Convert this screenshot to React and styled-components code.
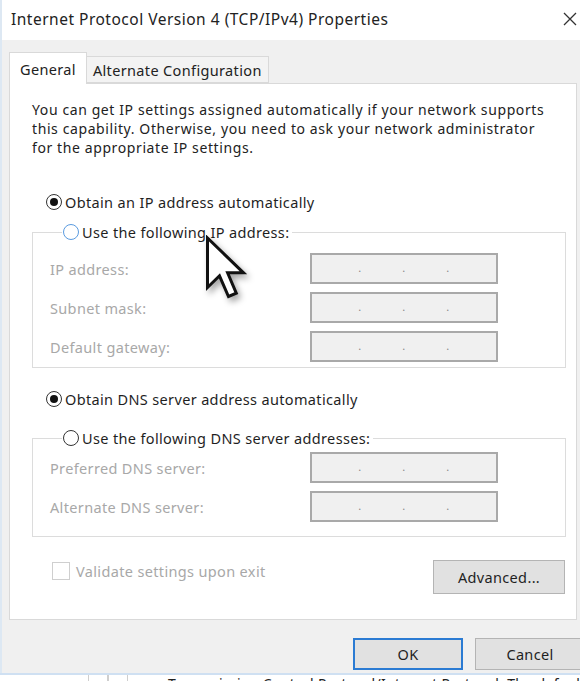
import React from 'react';
import styled, { createGlobalStyle } from 'styled-components';

const GlobalStyle = createGlobalStyle`
  html, body {
    margin: 0;
    padding: 0;
    background: #ffffff;
  }
  body {
    font-family: "Noto Sans", "Open Sans", sans-serif;
    color: #1a1a1a;
    letter-spacing: 0.35px;
  }
`;

const Window = styled.div`
  position: relative;
  width: 580px;
  height: 681px;
  overflow: hidden;
  display: flex;
  flex-direction: column;
  background: #ffffff;
`;

const TitleBar = styled.div`
  height: 40px;
  flex: none;
  display: flex;
  align-items: center;
  justify-content: space-between;
  padding: 0 0 2px 9px;
  box-sizing: border-box;
  font-size: 15.5px;
  letter-spacing: 0.5px;
  color: #222;
  background: #fff;
  border-left: 2px solid #dde8f3;
`;

const CloseIcon = styled.svg`
  width: 14px;
  height: 14px;
  margin-right: 3px;
`;

const Body = styled.div`
  flex: none;
  height: 633px;
  box-sizing: border-box;
  background: #f0f0f0;
  border-left: 2px solid #dde8f3;
  padding: 12px 3px 3px 7px;
  display: flex;
  flex-direction: column;
`;

const Tabs = styled.div`
  display: flex;
  align-items: flex-end;
  height: 31px;
  flex: none;
`;

const Tab = styled.div`
  box-sizing: border-box;
  height: ${p => (p.active ? '32px' : '27px')};
  padding: 0 ${p => (p.active ? '10px' : '6px')};
  display: flex;
  align-items: center;
  font-size: 14.5px;
  color: #222;
  background: ${p => (p.active ? '#ffffff' : '#f3f3f3')};
  border: 1px solid #d9d9d9;
  border-bottom: ${p => (p.active ? 'none' : '1px solid #d9d9d9')};
  margin-bottom: ${p => (p.active ? '-1px' : '0')};
  position: relative;
  z-index: ${p => (p.active ? 1 : 0)};
  border-left: ${p => (p.active ? '1px solid #d9d9d9' : 'none')};
`;

const Panel = styled.div`
  flex: none;
  height: 537px;
  box-sizing: border-box;
  background: #ffffff;
  border: 1px solid #d9d9d9;
  padding: 16px 10px 0 22px;
  display: flex;
  flex-direction: column;
  font-size: 14.5px;
`;

const Description = styled.p`
  margin: 0;
  font-size: 14px;
  letter-spacing: 0.6px;
  line-height: 19px;
  color: #222;
  white-space: nowrap;
`;

const RadioRow = styled.label`
  display: flex;
  align-items: center;
  height: 20px;
  margin: ${p => p.margin || '0'};
  color: #1f1f1f;
  gap: 3px;
  white-space: nowrap;
`;

const RadioDot = styled.span`
  width: 16px;
  height: 16px;
  box-sizing: border-box;
  border-radius: 50%;
  border: ${p => (p.hover ? '1.5px solid #5a9be0' : '1px solid #333')};
  background: #fff;
  display: flex;
  align-items: center;
  justify-content: center;
  flex: none;

  &::after {
    content: '';
    width: 8px;
    height: 8px;
    border-radius: 50%;
    background: #111;
    display: ${p => (p.checked ? 'block' : 'none')};
  }
`;

const Group = styled.fieldset`
  margin: ${p => p.top}px 0 0 0;
  padding: ${p => p.pad}px 67px ${p => p.bottom}px 17px;
  border: 1px solid #dcdcdc;
  min-width: 0;
  display: flex;
  flex-direction: column;
  gap: 8px;
`;

const Legend = styled.legend`
  margin-left: 12px;
  padding: 0 3px 0 1px;
`;

const FieldRow = styled.div`
  display: flex;
  align-items: center;
  justify-content: space-between;
  height: 31px;
`;

const FieldLabel = styled.span`
  color: #a8a8a8;
`;

const IpBox = styled.div`
  width: 188px;
  height: 31px;
  box-sizing: border-box;
  border: 2px solid #a9a9a9;
  background: #f0f0f0;
  display: flex;
  justify-content: space-around;
  align-items: flex-end;
  padding: 0 26px 9px 26px;
  font-size: 11px;
  line-height: 1;
  color: #888;
`;

const BottomRow = styled.div`
  display: flex;
  align-items: flex-start;
  justify-content: space-between;
  margin-top: 23px;
  padding-left: 20px;
  padding-right: 1px;
`;

const CheckLabel = styled.label`
  display: flex;
  align-items: center;
  gap: 6px;
  color: #a8a8a8;
  height: 19px;
  margin-top: 1px;
`;

const CheckBox = styled.span`
  width: 18px;
  height: 18px;
  box-sizing: border-box;
  border: 1px solid #cfcfcf;
  background: #fff;
`;

const Button = styled.button`
  font-family: inherit;
  font-size: 14.5px;
  letter-spacing: 0.35px;
  color: #1f1f1f;
  background: #e1e1e1;
  border: ${p => (p.primary ? '2px solid #2b7bd3' : '1px solid #b4b4b4')};
  width: ${p => p.width}px;
  height: ${p => p.height}px;
  padding: 0;
  flex: none;
`;

const Footer = styled.div`
  display: flex;
  gap: 12px;
  margin-top: 18px;
  padding-left: 344px;
`;

const Strip = styled.div`
  flex: 1;
  border-top: 2px solid #cfe0f2;
  background: #fff;
  display: flex;
  align-items: flex-start;
  overflow: hidden;
  font-size: 14px;
  color: #222;
  padding-left: 88px;
`;

const StripCell = styled.span`
  width: 18px;
  height: 8px;
  border: 1px solid #cfcfcf;
  border-top: none;
  flex: none;
`;

const StripText = styled.span`
  margin-left: 40px;
  line-height: 1;
  margin-top: 2px;
  white-space: nowrap;
`;

const Pointer = styled.svg`
  position: absolute;
  left: 204px;
  top: 235px;
  width: 46px;
  height: 66px;
  pointer-events: none;
  filter: drop-shadow(3px 4px 3px rgba(0, 0, 0, 0.35));
`;

function IpField({ label }) {
  return (
    <FieldRow>
      <FieldLabel>{label}</FieldLabel>
      <IpBox>
        <span>.</span>
        <span>.</span>
        <span>.</span>
      </IpBox>
    </FieldRow>
  );
}

export default function App() {
  return (
    <>
      <GlobalStyle />
      <Window>
        <TitleBar>
          <span>Internet Protocol Version 4 (TCP/IPv4) Properties</span>
          <CloseIcon viewBox="0 0 14 14">
            <path d="M1 1L13 13M13 1L1 13" stroke="#333" strokeWidth="1.3" />
          </CloseIcon>
        </TitleBar>
        <Body>
          <Tabs>
            <Tab active>General</Tab>
            <Tab>Alternate Configuration</Tab>
          </Tabs>
          <Panel>
            <Description>
              You can get IP settings assigned automatically if your network supports
              <br />
              this capability. Otherwise, you need to ask your network administrator
              <br />
              for the appropriate IP settings.
            </Description>

            <RadioRow margin="35px 0 0 14px">
              <RadioDot checked />
              Obtain an IP address automatically
            </RadioRow>

            <Group top={10} pad={11} bottom={5}>
              <Legend>
                <RadioRow>
                  <RadioDot hover />
                  Use the following IP address:
                </RadioRow>
              </Legend>
              <IpField label="IP address:" />
              <IpField label="Subnet mask:" />
              <IpField label="Default gateway:" />
            </Group>

            <RadioRow margin="21px 0 0 14px">
              <RadioDot checked />
              Obtain DNS server address automatically
            </RadioRow>

            <Group top={19} pad={4} bottom={14}>
              <Legend>
                <RadioRow>
                  <RadioDot />
                  Use the following DNS server addresses:
                </RadioRow>
              </Legend>
              <IpField label="Preferred DNS server:" />
              <IpField label="Alternate DNS server:" />
            </Group>

            <BottomRow>
              <CheckLabel>
                <CheckBox />
                Validate settings upon exit
              </CheckLabel>
              <Button width={132} height={34}>Advanced...</Button>
            </BottomRow>
          </Panel>
          <Footer>
            <Button primary width={110} height={32}>OK</Button>
            <Button width={110} height={32}>Cancel</Button>
          </Footer>
        </Body>
        <Strip>
          <StripCell />
          <StripCell />
          <StripText>Transmission Control Protocol/Internet Protocol. The default</StripText>
        </Strip>
        <Pointer viewBox="0 0 15 22">
          <path
            d="M1 1 L1 17.5 L5 13.6 L8 20.5 L10.6 19.4 L7.7 12.6 L13 12.6 Z"
            fill="#fff"
            stroke="#111"
            strokeWidth="1"
            strokeLinejoin="miter"
          />
        </Pointer>
      </Window>
    </>
  );
}
